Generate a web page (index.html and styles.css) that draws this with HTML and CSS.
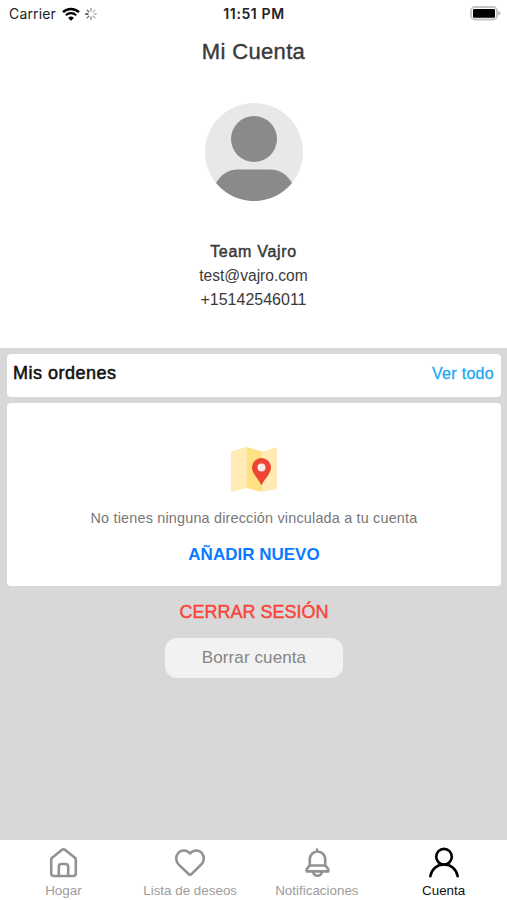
FILE: index.html
```html
<!DOCTYPE html>
<html lang="es">
<head>
    <meta charset="UTF-8">
    <meta name="viewport" content="width=device-width, initial-scale=1">
    <title>Mi Cuenta</title>
    <link rel="stylesheet" href="styles.css">
</head>
<body>
    <div class="status-bar">
        <div class="status-left">
            <span class="carrier">Carrier</span>
            <svg class="wifi" width="18" height="14" viewBox="0 0 18 14">
                <path d="M1 5.2a11.5 11.5 0 0 1 16 0" fill="none" stroke="#000" stroke-width="2.4"/>
                <path d="M3.8 8.3a7.5 7.5 0 0 1 10.4 0" fill="none" stroke="#000" stroke-width="2.2"/>
                <path d="M9 13.8L6.1 10.9a4.1 4.1 0 0 1 5.8 0z"/>
            </svg>
            <svg class="spinner" width="12" height="12" viewBox="-6 -6 12 12" stroke-width="1.3" stroke-linecap="round">
                <path d="M0-3v-2.4" stroke="#999"/>
                <path d="M2.1-2.1l1.7-1.7" stroke="#bbb"/>
                <path d="M3 0h2.4" stroke="#bbb"/>
                <path d="M2.1 2.1l1.7 1.7" stroke="#aaa"/>
                <path d="M0 3v2.4" stroke="#888"/>
                <path d="M-2.1 2.1l-1.7 1.7" stroke="#666"/>
                <path d="M-3 0h-2.4" stroke="#333"/>
                <path d="M-2.1-2.1l-1.7-1.7" stroke="#666"/>
            </svg>
        </div>
        <span class="time">11:51 PM</span>
        <div class="status-right">
            <svg width="32" height="16" viewBox="0 0 32 16">
                <rect x="2" y="1" width="26" height="12.5" rx="4" fill="#fff" stroke="#c4c4c4" stroke-width="1.8"/>
                <rect x="4" y="3" width="22" height="8.8" rx="1.2"/>
                <path d="M29.4 5q1.8.8 1.8 2.3t-1.8 2.3z" fill="#aaa"/>
            </svg>
        </div>
    </div>

    <header class="profile">
        <h1>Mi Cuenta</h1>
        <svg class="avatar" width="98" height="98" viewBox="0 0 98 98">
            <circle cx="49" cy="49" r="49" fill="#e8e8e8"/>
            <circle cx="49" cy="36" r="23" fill="#8a8a8a"/>
            <path d="M11 80Q19 66.500 33 66.500h32Q79 66.500 87 80A49 49 0 0 1 11 80z" fill="#8a8a8a"/>
        </svg>
        <div class="name">Team Vajro</div>
        <div class="email">test@vajro.com</div>
        <div class="phone">+15142546011</div>
    </header>

    <main class="content">
        <section class="card orders">
            <h2>Mis ordenes</h2>
            <a class="see-all">Ver todo</a>
        </section>

        <section class="card address">
            <svg class="map" width="48" height="46" viewBox="0 0 48 46">
                <path d="M1 4.500L16.500 0v41L1 45z" fill="#ffebb3"/>
                <path d="M16.500 0L32 4.500V45L16.500 41z" fill="#ffe082"/>
                <path d="M32 4.500L47 .5v41.500L32 45z" fill="#ffebb3"/>
                <path d="M31.500 38.500c-2-5.500-9.500-11.500-9.500-18a9.500 9.500 0 0 1 19 0c0 6.500-7.500 12.500-9.500 18z" fill="#f04432"/>
                <circle cx="31.500" cy="20.500" r="4" fill="#fbeaea"/>
            </svg>
            <p>No tienes ninguna dirección vinculada a tu cuenta</p>
            <a class="add-new">AÑADIR NUEVO</a>
        </section>

        <a class="logout">CERRAR SESIÓN</a>
        <button class="delete-account">Borrar cuenta</button>
    </main>

    <nav class="tabs">
        <a class="tab">
            <svg width="32" height="32" viewBox="0 0 32 32">
                <path d="M4.200 12.700c0-1 .4-1.700 1.200-2.300l9.300-7.400c1.100-.9 2.500-.9 3.600 0l9.300 7.400c.8.600 1.200 1.300 1.200 2.300V26.500c0 1.600-.9 2.500-2.500 2.500H6.700c-1.600 0-2.500-.9-2.500-2.500z"/>
                <path d="M11.800 29v-9.300c0-1.700 1-2.700 2.700-2.700h4c1.700 0 2.700 1 2.700 2.700v9.300"/>
            </svg>
            <span>Hogar</span>
        </a>
        <a class="tab">
            <svg width="32" height="32" viewBox="0 0 32 32">
                <path d="M16 6.500C12.800 2.600 7 2.600 4.200 6 1.100 9.700 1.800 14.600 5 17.800l9.300 9c1.100 1.100 2.300 1.100 3.400 0l9.300-9c3.200-3.200 3.900-8.100.8-11.800C25 2.600 19.200 2.600 16 6.500z"/>
            </svg>
            <span>Lista de deseos</span>
        </a>
        <a class="tab">
            <svg width="32" height="32" viewBox="0 0 32 32">
                <path d="M16 4.500V2.500M8.800 18.500v-6.300a7.700 7.700 0 0 1 15.400 0v6.300"/>
                <path d="M8.500 18.500h16l2.800 3.700v2.200H5.700v-2.200zM12 25c.6 2.400 2.200 3.700 4.500 3.700s3.900-1.300 4.500-3.700"/>
            </svg>
            <span>Notificaciones</span>
        </a>
        <a class="tab active">
            <svg width="32" height="32" viewBox="0 0 32 32">
                <circle cx="16" cy="9.700" r="7.800"/>
                <path d="M2.300 29.300C3.500 22 9 17.500 16 17.500S28.500 22 29.700 29.300"/>
            </svg>
            <span>Cuenta</span>
        </a>
    </nav>
</body>
</html>
```
FILE: styles.css
```css
* {
    box-sizing: border-box;
}

body {
    margin: 0;
    height: 100vh;
    display: flex;
    flex-direction: column;
    overflow: hidden;
    background: #fff;
    color: #3a3a3a;
    font-family: "Liberation Sans", Arial, sans-serif;
}

h1, h2, p {
    margin: 0;
    font-weight: normal;
}

.status-bar {
    height: 27px;
    padding: 0 6px 0 9px;
    display: grid;
    grid-template-columns: 1fr auto 1fr;
    align-items: center;
    font-family: Inter, sans-serif;
    font-size: 14px;
    color: #222;
}

.status-left {
    display: flex;
    align-items: center;
}

.carrier {
    letter-spacing: 0.15px;
}

.wifi {
    margin: 0 5px 0 6px;
}

.time {
    padding-right: 2px;
    font-weight: 600;
    font-size: 14px;
    letter-spacing: 0.6px;
}

.status-right {
    display: flex;
    justify-content: flex-end;
}

.profile {
    height: 321px;
    padding-top: 1px;
    display: flex;
    flex-direction: column;
    align-items: center;
}

.profile h1 {
    height: 75px;
    line-height: 48px;
    font-size: 22px;
    letter-spacing: 0.35px;
    -webkit-text-stroke: 0.4px;
}

.avatar {
    margin-bottom: 39px;
}

.name, .email, .phone {
    line-height: 24px;
    font-size: 16px;
}

.name {
    letter-spacing: 0.7px;
    -webkit-text-stroke: 0.5px;
}

.email {
    font-size: 15.6px;
}

.content {
    flex: 1;
    padding: 6px 6px 0 7px;
    background: #d8d8d8;
    display: flex;
    flex-direction: column;
    align-items: center;
}

.card {
    width: 100%;
    margin-bottom: 6px;
    background: #fff;
    border-radius: 4px;
}

.orders {
    height: 43px;
    padding: 0 7px 4px 6px;
    display: flex;
    align-items: center;
    justify-content: space-between;
}

.orders h2 {
    font-size: 18px;
    letter-spacing: 0.5px;
    color: #111;
    -webkit-text-stroke: 0.55px;
}

.see-all {
    font-size: 16px;
    letter-spacing: 0.3px;
    color: #22a7f2;
    -webkit-text-stroke: 0.3px;
}

.address {
    height: 183px;
    padding-top: 44px;
    display: flex;
    flex-direction: column;
    align-items: center;
}

.address p {
    margin-top: 15px;
    line-height: 20px;
    font-size: 14.4px;
    letter-spacing: 0.19px;
    color: #777;
}

.add-new {
    margin-top: 17px;
    line-height: 20px;
    font-size: 17px;
    font-weight: bold;
    color: #0a7aff;
}

.logout {
    margin-top: 8px;
    line-height: 24px;
    font-size: 18px;
    color: #fb4236;
    -webkit-text-stroke: 0.4px;
}

.delete-account {
    width: 178px;
    height: 40px;
    margin-top: 14px;
    padding: 0;
    border: none;
    border-radius: 12px;
    background: #f2f2f2;
    color: #858585;
    font-family: inherit;
    font-size: 17px;
    letter-spacing: 0.1px;
}

.tabs {
    height: 60px;
    display: grid;
    grid-template-columns: repeat(4, 1fr);
}

.tab {
    padding-top: 7px;
    display: flex;
    flex-direction: column;
    align-items: center;
    color: #9c9c9c;
    font-size: 13.4px;
    line-height: 16px;
}

.tab svg {
    fill: none;
    stroke: #929292;
    stroke-width: 2.6;
    stroke-linecap: round;
    stroke-linejoin: round;
    margin-bottom: 4px;
}

.tab.active {
    color: #111;
}

.tab.active svg {
    stroke: #000;
}
```
